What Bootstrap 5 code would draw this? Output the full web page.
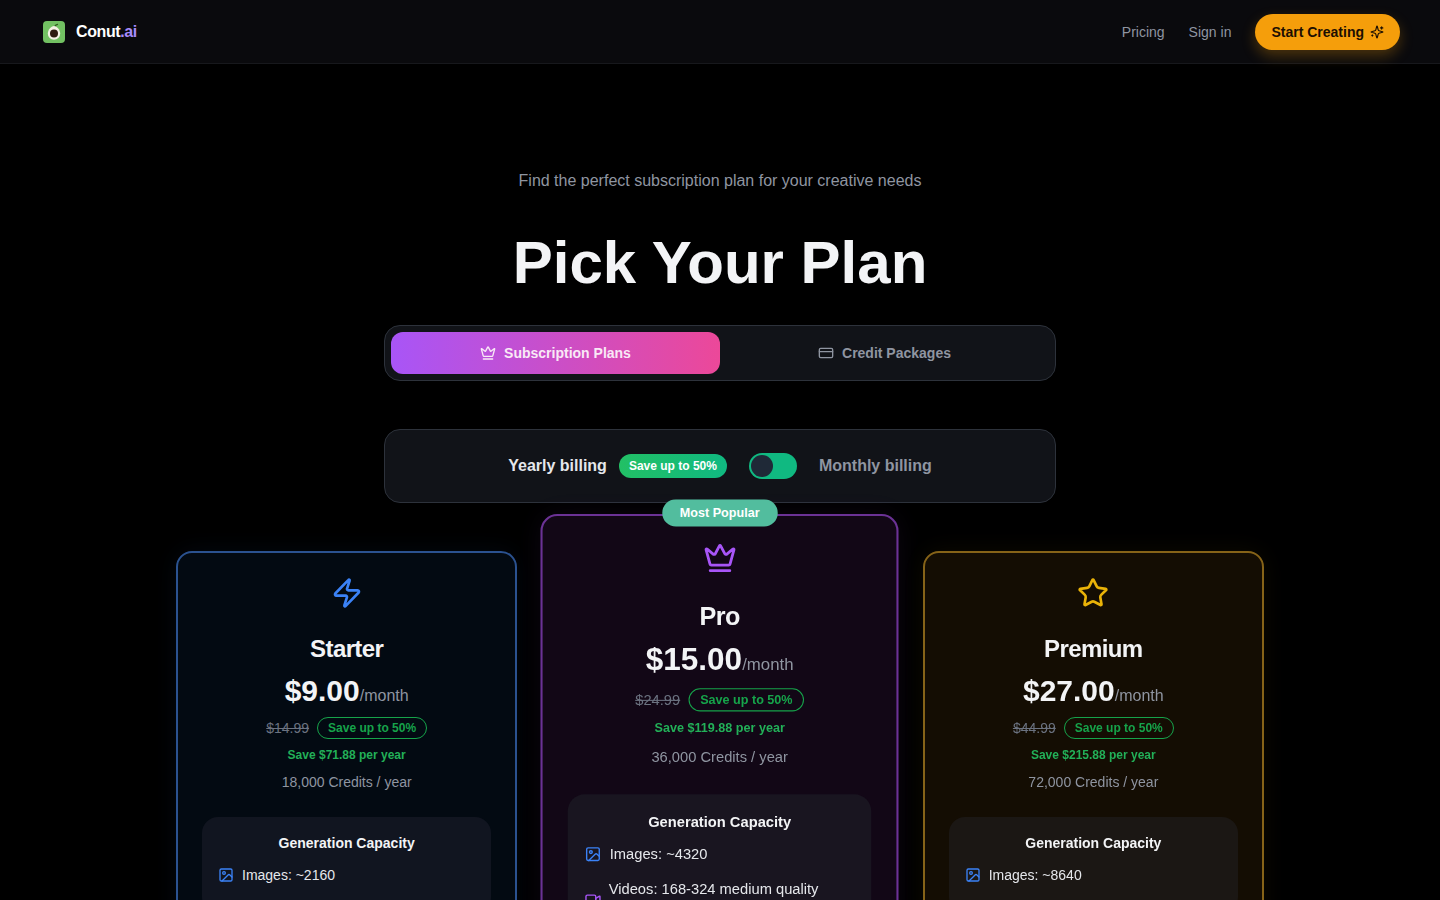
<!DOCTYPE html>
<html lang="en">
<head>
<meta charset="utf-8">
<title>Conut.ai – Pick Your Plan</title>
<link href="https://cdn.jsdelivr.net/npm/bootstrap@5.3.0/dist/css/bootstrap.min.css" rel="stylesheet">
<style>
html,body{height:100%;background:#000;}
body{font-family:"Liberation Sans",Arial,sans-serif;color:#f3f4f6;overflow:hidden;}
.shell{height:900px;overflow:hidden;}
svg.ico{fill:none;stroke:currentColor;stroke-width:2;stroke-linecap:round;stroke-linejoin:round;flex:none;display:block;}
.topbar{height:64px;background:#0a0a0d;border-bottom:1px solid #17181c;padding:0 40px 0 43px;}
.brand-word{font-size:16px;font-weight:700;color:#fff;letter-spacing:-.4px;margin-left:11px;}
.brand-word span{color:#a78bfa;}
.toplink{font-size:14px;color:#8f95a1;text-decoration:none;padding-top:1px;}
.cta{height:36px;padding:2px 16px 0;gap:6px;background:#f59e0b;color:#1c0f02;border:0;border-radius:18px;font-size:14px;font-weight:700;box-shadow:0 6px 14px rgba(245,158,11,.28);}
.cta:hover{background:#f59e0b;color:#1c0f02;}
.cta svg{margin-top:-2px;}
.subtitle{margin:105px 0 40px;font-size:16px;line-height:24px;color:#8f95a1;text-align:center;}
.headline{margin:0 0 32px;font-size:60px;line-height:60px;font-weight:700;color:#f3f4f6;text-align:center;}
.narrow{width:672px;margin-left:auto;margin-right:auto;}
.tabbar{height:56px;padding:6px;background:#111318;border:1px solid #2d323b;border-radius:16px;margin-bottom:48px;}
.tabitem{flex:1 1 0;border-radius:12px;font-size:14px;font-weight:700;color:#8f95a1;height:42px;}
.tabitem.on{background:linear-gradient(90deg,#a855f7,#ec4899);color:#f9e9f6;}
.billbar{height:74px;background:#111318;border:1px solid #2d323b;border-radius:16px;margin-bottom:48px;}
.billtxt{font-size:16px;font-weight:700;color:#e5e7eb;}
.billtxt.off{color:#8f95a1;}
.savechip{margin-left:12px;background:linear-gradient(90deg,#22c065,#10b981);color:#fff;font-size:12px;font-weight:700;height:24px;line-height:24px;padding:0 10px;border-radius:12px;}
.sw{width:48px;height:26px;border-radius:13px;background:#10b981;padding:2px;margin:0 22px;}
.sw i{display:block;width:22px;height:22px;border-radius:50%;background:#1f2937;}
.plans{display:grid;grid-template-columns:repeat(3,1fr);gap:32px;width:1088px;margin:0 auto;}
.plan{position:relative;height:1480px;border-width:2px;border-style:solid;border-radius:16px;padding:24px;text-align:center;color:#f3f4f6;}
.plan-b{background:#030a12;border-color:#2b5290;box-shadow:0 0 24px rgba(59,130,246,.07);}
.plan-p{background:#120716;border-color:#6b3295;box-shadow:0 0 24px rgba(168,85,247,.07);transform:scale(1.05);}
.plan-y{background:#140d03;border-color:#866318;box-shadow:0 0 24px rgba(234,179,8,.06);}
.flag{position:absolute;left:50%;top:-16px;transform:translateX(-50%);background:#52bd9e;color:#fff;font-size:12px;font-weight:700;height:26px;line-height:26px;padding:0 17px;border-radius:13px;white-space:nowrap;}
.plan-name{margin:24px 0 0;font-size:24px;line-height:32px;font-weight:700;letter-spacing:-.6px;}
.price{margin-top:8px;line-height:36px;font-size:30px;font-weight:700;}
.plan-p .price{margin-top:7px;}
.plan-p .oldrow{margin-top:4px;}
.price small{font-size:16px;font-weight:400;color:#8f95a1;}
.oldrow{margin-top:3px;height:22px;}
.oldprice{font-size:14px;color:#6b7280;text-decoration:line-through;}
.pill{font-size:12px;font-weight:700;color:#16a34a;border:1px solid #16a34a;border-radius:11px;height:22px;line-height:20px;padding:0 10px;}
.yearsave{margin-top:7px;font-size:12px;line-height:18px;font-weight:700;color:#22b058;}
.credits{margin-top:8px;font-size:14px;line-height:20px;color:#8f95a1;}
.cap{margin-top:25px;border-radius:16px;padding:16px;text-align:left;background:#111520;}
.plan-p .cap{background:#191520;margin-top:26px;}
.plan-y .cap{background:#1b1714;}
.cap h6{margin:0 0 12px;font-size:14px;line-height:20px;font-weight:700;text-align:center;color:#f3f4f6;}
.plan-p .cap h6{margin-bottom:11px;}
.caprow{font-size:14px;line-height:20px;color:#e5e7eb;margin-bottom:12px;gap:8px;}
.plan-p .caprow{margin-bottom:13px;}
.caprow.tall{gap:7px;height:40px;}
.caprow.tall svg{margin-top:12px;}
</style>
</head>
<body>
<div class="shell">
<nav class="topbar d-flex align-items-center justify-content-between">
  <a class="d-flex align-items-center text-decoration-none" href="#">
    <svg width="22" height="22" viewBox="0 0 22 22" aria-hidden="true">
      <rect width="22" height="22" rx="4" fill="#72c162"/>
      <path d="M11.5 6C12 4.6 13 3.8 14.5 3.4" stroke="#2f5a1e" stroke-width="1.2" fill="none" stroke-linecap="round"/>
      <path d="M11 5C14 5 17.2 9 17.2 12.6A6.2 6.2 0 0 1 4.8 12.6C4.8 9 8 5 11 5Z" fill="#f4f1e4"/>
      <circle cx="11" cy="12.6" r="4" fill="#2e1c10"/>
    </svg>
    <span class="brand-word">Conut<span>.ai</span></span>
  </a>
  <div class="d-flex align-items-center gap-4">
    <a class="toplink" href="#">Pricing</a>
    <a class="toplink" href="#">Sign in</a>
    <button class="btn cta d-flex align-items-center" type="button">Start Creating
      <svg class="ico" width="14" height="14" viewBox="0 0 24 24"><path d="M9.937 15.5A2 2 0 0 0 8.5 14.063l-6.135-1.582a.5.5 0 0 1 0-.962L8.5 9.936A2 2 0 0 0 9.937 8.5l1.582-6.135a.5.5 0 0 1 .963 0L14.063 8.5A2 2 0 0 0 15.5 9.937l6.135 1.581a.5.5 0 0 1 0 .964L15.5 14.063a2 2 0 0 0-1.437 1.437l-1.582 6.135a.5.5 0 0 1-.963 0z"/><path d="M20 3v4M22 5h-4M4 17v2M5 18H3"/></svg>
    </button>
  </div>
</nav>

<main>
  <p class="subtitle">Find the perfect subscription plan for your creative needs</p>
  <h1 class="headline">Pick Your Plan</h1>

  <div class="tabbar narrow d-flex">
    <div class="tabitem on d-flex align-items-center justify-content-center gap-2">
      <svg class="ico" width="16" height="16" viewBox="0 0 24 24"><path d="M11.562 3.266a.5.5 0 0 1 .876 0L15.39 8.87a1 1 0 0 0 1.516.294L21.183 5.5a.5.5 0 0 1 .798.519l-2.834 10.246a1 1 0 0 1-.956.734H5.81a1 1 0 0 1-.957-.734L2.02 6.02a.5.5 0 0 1 .798-.519l4.276 3.664a1 1 0 0 0 1.516-.294z"/><path d="M5 21h14"/></svg>
      Subscription Plans
    </div>
    <div class="tabitem d-flex align-items-center justify-content-center gap-2">
      <svg class="ico" width="16" height="16" viewBox="0 0 24 24"><rect width="20" height="14" x="2" y="5" rx="2"/><line x1="2" x2="22" y1="10" y2="10"/></svg>
      Credit Packages
    </div>
  </div>

  <div class="billbar narrow d-flex align-items-center justify-content-center">
    <span class="billtxt">Yearly billing</span>
    <span class="savechip">Save up to 50%</span>
    <span class="sw"><i></i></span>
    <span class="billtxt off">Monthly billing</span>
  </div>

  <div class="plans">
    <section class="plan plan-b">
      <svg class="ico mx-auto" style="color:#3b82f6" width="32" height="32" viewBox="0 0 24 24"><path d="M4 14a1 1 0 0 1-.78-1.63l9.9-10.2a.5.5 0 0 1 .86.46l-1.92 6.02A1 1 0 0 0 13 10h7a1 1 0 0 1 .78 1.63l-9.9 10.2a.5.5 0 0 1-.86-.46l1.92-6.02A1 1 0 0 0 11 14z"/></svg>
      <h3 class="plan-name">Starter</h3>
      <div class="price">$9.00<small>/month</small></div>
      <div class="oldrow d-flex align-items-center justify-content-center gap-2"><span class="oldprice">$14.99</span><span class="pill">Save up to 50%</span></div>
      <div class="yearsave">Save $71.88 per year</div>
      <div class="credits">18,000 Credits / year</div>
      <div class="cap">
        <h6>Generation Capacity</h6>
        <div class="caprow d-flex align-items-center"><svg class="ico" style="color:#3b82f6" width="16" height="16" viewBox="0 0 24 24"><rect width="18" height="18" x="3" y="3" rx="2"/><circle cx="9" cy="9" r="2"/><path d="m21 15-3.086-3.086a2 2 0 0 0-2.828 0L6 21"/></svg>Images: ~2160</div>
      </div>
    </section>

    <section class="plan plan-p">
      <span class="flag">Most Popular</span>
      <svg class="ico mx-auto" style="color:#a855f7" width="32" height="32" viewBox="0 0 24 24"><path d="M11.562 3.266a.5.5 0 0 1 .876 0L15.39 8.87a1 1 0 0 0 1.516.294L21.183 5.5a.5.5 0 0 1 .798.519l-2.834 10.246a1 1 0 0 1-.956.734H5.81a1 1 0 0 1-.957-.734L2.02 6.02a.5.5 0 0 1 .798-.519l4.276 3.664a1 1 0 0 0 1.516-.294z"/><path d="M5 21h14"/></svg>
      <h3 class="plan-name">Pro</h3>
      <div class="price">$15.00<small>/month</small></div>
      <div class="oldrow d-flex align-items-center justify-content-center gap-2"><span class="oldprice">$24.99</span><span class="pill">Save up to 50%</span></div>
      <div class="yearsave">Save $119.88 per year</div>
      <div class="credits">36,000 Credits / year</div>
      <div class="cap">
        <h6>Generation Capacity</h6>
        <div class="caprow d-flex align-items-center"><svg class="ico" style="color:#3b82f6" width="16" height="16" viewBox="0 0 24 24"><rect width="18" height="18" x="3" y="3" rx="2"/><circle cx="9" cy="9" r="2"/><path d="m21 15-3.086-3.086a2 2 0 0 0-2.828 0L6 21"/></svg>Images: ~4320</div>
        <div class="caprow tall d-flex align-items-start"><svg class="ico" style="color:#a855f7" width="16" height="16" viewBox="0 0 24 24"><path d="m16 13 5.223 3.482a.5.5 0 0 0 .777-.416V7.87a.5.5 0 0 0-.752-.432L16 10.5"/><rect x="2" y="6" width="14" height="12" rx="2"/></svg><span>Videos: 168-324 medium quality</span></div>
      </div>
    </section>

    <section class="plan plan-y">
      <svg class="ico mx-auto" style="color:#eab308" width="32" height="32" viewBox="0 0 24 24"><path d="M11.525 2.295a.53.53 0 0 1 .95 0l2.31 4.679a2.123 2.123 0 0 0 1.595 1.16l5.166.756a.53.53 0 0 1 .294.904l-3.736 3.638a2.123 2.123 0 0 0-.611 1.878l.882 5.14a.53.53 0 0 1-.771.56l-4.618-2.428a2.122 2.122 0 0 0-1.973 0L6.396 21.01a.53.53 0 0 1-.77-.56l.881-5.139a2.122 2.122 0 0 0-.611-1.879L2.16 9.795a.53.53 0 0 1 .294-.906l5.165-.755a2.122 2.122 0 0 0 1.597-1.16z"/></svg>
      <h3 class="plan-name">Premium</h3>
      <div class="price">$27.00<small>/month</small></div>
      <div class="oldrow d-flex align-items-center justify-content-center gap-2"><span class="oldprice">$44.99</span><span class="pill">Save up to 50%</span></div>
      <div class="yearsave">Save $215.88 per year</div>
      <div class="credits">72,000 Credits / year</div>
      <div class="cap">
        <h6>Generation Capacity</h6>
        <div class="caprow d-flex align-items-center"><svg class="ico" style="color:#3b82f6" width="16" height="16" viewBox="0 0 24 24"><rect width="18" height="18" x="3" y="3" rx="2"/><circle cx="9" cy="9" r="2"/><path d="m21 15-3.086-3.086a2 2 0 0 0-2.828 0L6 21"/></svg>Images: ~8640</div>
      </div>
    </section>
  </div>
</main>
</div>
<script src="https://cdn.jsdelivr.net/npm/bootstrap@5.3.0/dist/js/bootstrap.bundle.min.js"></script>
</body>
</html>
